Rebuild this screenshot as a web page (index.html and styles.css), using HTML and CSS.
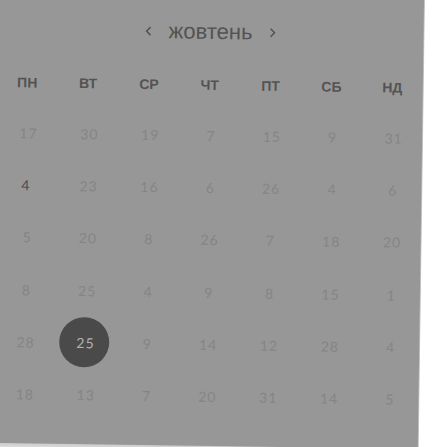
FILE: index.html
```html
<!DOCTYPE html>
<html lang="uk">
<head>
<meta charset="utf-8">
<meta name="viewport" content="width=device-width, initial-scale=1">
<title>жовтень</title>
<link rel="stylesheet" href="styles.css">
</head>
<body>
<main class="calendar">
  <header class="month">
    <button class="nav" type="button" aria-label="Попередній місяць"><svg width="8" height="12" viewBox="0 0 8 12"><path d="M6 2 2 6l4 4"/></svg></button>
    <h1 class="title">жовтень</h1>
    <button class="nav" type="button" aria-label="Наступний місяць"><svg width="8" height="12" viewBox="0 0 8 12"><path d="m2 2 4 4-4 4"/></svg></button>
  </header>
  <table class="days">
    <thead>
      <tr><th scope="col">ПН</th><th scope="col">ВТ</th><th scope="col">СР</th><th scope="col">ЧТ</th><th scope="col">ПТ</th><th scope="col">СБ</th><th scope="col">НД</th></tr>
    </thead>
    <tbody>
      <tr><td><button class="day">17</button></td><td><button class="day">30</button></td><td><button class="day">19</button></td><td><button class="day">7</button></td><td><button class="day">15</button></td><td><button class="day">9</button></td><td><button class="day">31</button></td></tr>
      <tr><td><button class="day today">4</button></td><td><button class="day">23</button></td><td><button class="day">16</button></td><td><button class="day">6</button></td><td><button class="day">26</button></td><td><button class="day">4</button></td><td><button class="day">6</button></td></tr>
      <tr><td><button class="day">5</button></td><td><button class="day">20</button></td><td><button class="day">8</button></td><td><button class="day">26</button></td><td><button class="day">7</button></td><td><button class="day">18</button></td><td><button class="day">20</button></td></tr>
      <tr><td><button class="day">8</button></td><td><button class="day">25</button></td><td><button class="day">4</button></td><td><button class="day">9</button></td><td><button class="day">8</button></td><td><button class="day">15</button></td><td><button class="day">1</button></td></tr>
      <tr><td><button class="day">28</button></td><td><button class="day selected" aria-pressed="true">25</button></td><td><button class="day">9</button></td><td><button class="day">14</button></td><td><button class="day">12</button></td><td><button class="day">28</button></td><td><button class="day">4</button></td></tr>
      <tr><td><button class="day">18</button></td><td><button class="day">13</button></td><td><button class="day">7</button></td><td><button class="day">20</button></td><td><button class="day">31</button></td><td><button class="day">14</button></td><td><button class="day">5</button></td></tr>
    </tbody>
  </table>
</main>
</body>
</html>
```
FILE: styles.css
```css
* {
  box-sizing: border-box;
}

html {
  overflow: hidden;
}

body {
  display: flow-root;
  min-height: 100vh;
  margin: 0;
  background: #fff;
}

/* The card is tilted slightly and bleeds past the top and left edges. */
.calendar {
  margin: -10px 14px 0 -2px;
  padding: 10px 0 23px;
  background: #979797;
  box-shadow: 1px 0 0 #c4c4c4, 0 5px 4px #d0d0d0;
  clip-path: inset(0 -1px -12px 0);
  transform: rotate(0.8deg);
  transform-origin: 2px 10px;
  font-family: "Liberation Sans", Arial, sans-serif;
  color: #535353;
}

.month {
  display: flex;
  align-items: center;
  justify-content: center;
  gap: 8px;
  height: 58px;
}

.title {
  margin: 0;
  font-size: 22px;
  font-weight: 400;
}

.nav {
  display: flex;
  align-items: center;
  justify-content: center;
  width: 24px;
  height: 24px;
  padding: 0;
  border: 0;
  background: none;
  color: inherit;
}

.nav svg {
  fill: none;
  stroke: currentColor;
  stroke-width: 1.5;
}

.days {
  width: 100%;
  height: 362px;
  border-collapse: collapse;
  table-layout: fixed;
  text-align: center;
}

.days th {
  height: 48px;
  padding: 0;
  font-size: 14px;
  font-weight: 700;
}

.days td {
  padding: 0;
}

.day {
  display: block;
  width: 50px;
  height: 50px;
  margin: 0 auto;
  padding: 0 0 0 4px;
  border: 0;
  border-radius: 50%;
  background: none;
  font-family: Lato, sans-serif;
  font-size: 14px;
  letter-spacing: 1px;
  color: #858585;
}

.today {
  padding-left: 0;
  color: #4d4d4d;
}

.selected {
  padding-left: 2px;
  background: #4a4a4a;
  color: #b0b0b0;
}
```
